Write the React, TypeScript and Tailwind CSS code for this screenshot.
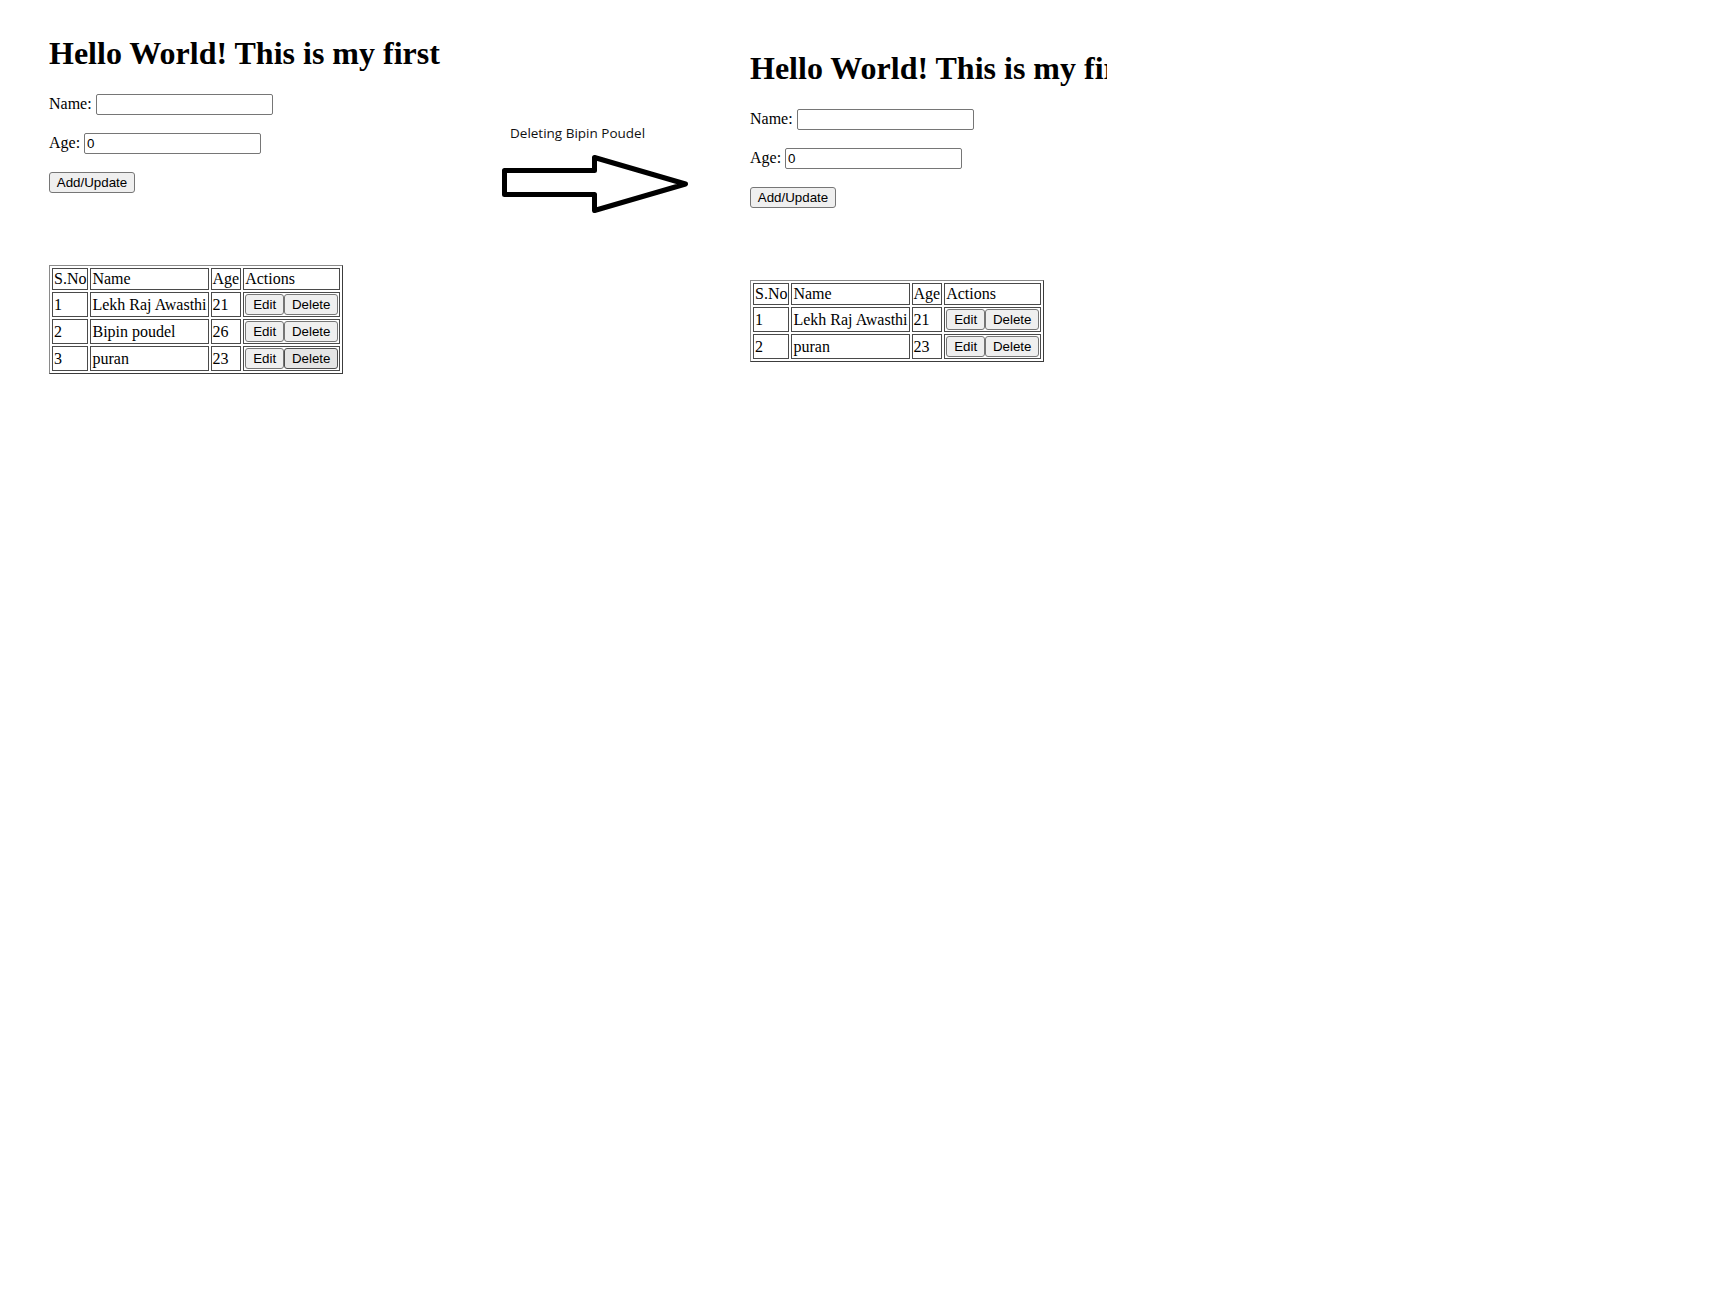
import { FC } from 'react';

type Person = { id: number; name: string; age: number };

const before: Person[] = [
    { id: 1, name: 'Lekh Raj Awasthi', age: 21 },
    { id: 2, name: 'Bipin poudel', age: 26 },
    { id: 3, name: 'puran', age: 23 },
];

const after: Person[] = [
    { id: 1, name: 'Lekh Raj Awasthi', age: 21 },
    { id: 2, name: 'puran', age: 23 },
];

const btn = "h-[21px] px-[6px] border rounded-[3px] text-[13.33px] leading-[17px] text-black font-['Liberation_Sans',Arial,sans-serif]";
const cell = "border border-[#4a4a4a] p-[1px] leading-[18px] text-left align-middle";

interface PanelProps {
    people: Person[];
    headClass: string;
    top: string;
    hovered?: number;
}

const Panel: FC<PanelProps> = ({ people, headClass, top, hovered }) => {
    return (
        <div className={`font-['Liberation_Serif','Times_New_Roman',serif] text-[16px] text-black ${top}`}>
            <div className={`overflow-hidden whitespace-nowrap ${headClass}`}>
                <h1 className='text-[32px] font-bold leading-[37px]'>Hello World! This is my first</h1>
            </div>
            <div className='mt-[20px] flex items-baseline h-[21px]'>
                <span>Name:</span>
                <input className="ml-[4px] w-[177px] h-[21px] px-[2px] border border-[#767676] rounded-[2px] bg-white text-[13.33px] leading-normal font-['Liberation_Sans',Arial,sans-serif] outline-none" defaultValue='' />
            </div>
            <div className='mt-[18px] flex items-baseline h-[21px]'>
                <span>Age:</span>
                <input className="ml-[4px] w-[177px] h-[21px] px-[2px] border border-[#767676] rounded-[2px] bg-white text-[13.33px] leading-normal font-['Liberation_Sans',Arial,sans-serif] outline-none" defaultValue='0' />
            </div>
            <div className='mt-[18px]'>
                <button className={`${btn} w-[86px] bg-[#efefef] border-[#767676]`}>Add/Update</button>
            </div>
            <table className='mt-[71px] border-separate border-spacing-[2px] border border-t-[#8a8a8a] border-l-[#8a8a8a] border-b-[#3c3c3c] border-r-[#3c3c3c]'>
                <tbody>
                    <tr>
                        <td className={cell}>S.No</td>
                        <td className={cell}>Name</td>
                        <td className={cell}>Age</td>
                        <td className={cell}>Actions</td>
                    </tr>
                    {people.map((p) => (
                        <tr key={p.id}>
                            <td className={cell}>{p.id}</td>
                            <td className={`${cell} whitespace-nowrap`}>{p.name}</td>
                            <td className={cell}>{p.age}</td>
                            <td className={cell}>
                                <div className='flex'>
                                    <button className={`${btn} w-[39px] bg-[#efefef] border-[#767676]`}>Edit</button>
                                    <button className={`${btn} w-[54px] ${hovered === p.id ? 'bg-[#e5e5e5] border-[#4f4f4f]' : 'bg-[#efefef] border-[#767676]'}`}>Delete</button>
                                </div>
                            </td>
                        </tr>
                    ))}
                </tbody>
            </table>
        </div>
    );
};

const App: FC = () => {
    return (
        <div className='min-h-[1300px] w-full bg-white flex items-start'>
            <div className='w-[460px] shrink-0 pl-[49px]'>
                <Panel people={before} headClass='w-[400px]' top='pt-[35px]' hovered={3} />
            </div>
            <div className='w-[290px] shrink-0 pl-[35px] pt-[124px]'>
                <p className="pl-[15px] text-[13.5px] leading-[18px] text-[#111] font-['Open_Sans',sans-serif] whitespace-nowrap">Deleting Bipin Poudel</p>
                <svg className='mt-[8px] block' width='200' height='70' viewBox='0 0 200 70' fill='none'>
                    <polygon
                        points='9.5,20.5 99.5,20.5 99.5,7.5 190.5,34 99.5,60.5 99.5,44.5 9.5,44.5'
                        stroke='#000'
                        strokeWidth='5'
                        strokeLinejoin='round'
                        fill='#fff'
                    />
                </svg>
            </div>
            <div className='shrink-0'>
                <Panel people={after} headClass='w-[357px]' top='pt-[50px]' />
            </div>
        </div>
    );
};

export default App;
